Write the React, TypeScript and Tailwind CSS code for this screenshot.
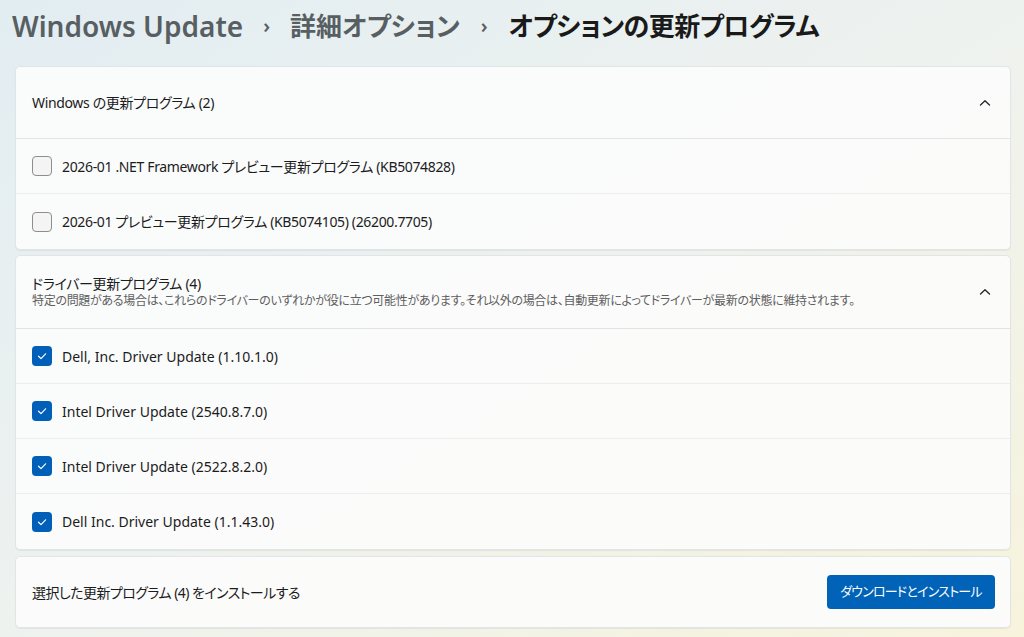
const jp = "font-['Segoe_UI','Noto_Sans','Noto_Sans_CJK_JP',sans-serif] [font-feature-settings:'palt']";

interface UpdateRowProps {
  label: string;
  checked: boolean;
  last?: boolean;
  tight?: boolean;
}

function Caret() {
  return (
    <svg width="12" height="8" viewBox="0 0 12 8" fill="none" className="mr-[1px]">
      <path d="M1.5 6 L6 1.8 L10.5 6" stroke="#2b2b2b" strokeWidth="1.4" strokeLinecap="round" strokeLinejoin="round" />
    </svg>
  );
}

function Checkbox({ checked }: { checked: boolean }) {
  if (checked) {
    return (
      <div className="flex h-[20px] w-[20px] shrink-0 items-center justify-center rounded-[4px] bg-[#005fb8]">
        <svg width="12" height="12" viewBox="0 0 12 12" fill="none">
          <path d="M2.5 6.2 L5 8.6 L9.6 3.8" stroke="white" strokeWidth="1.2" strokeLinecap="round" strokeLinejoin="round" />
        </svg>
      </div>
    );
  }
  return <div className="h-[20px] w-[20px] shrink-0 rounded-[4px] border border-[#8d8d8d] bg-[#f4f4f4]" />;
}

function UpdateRow(props: UpdateRowProps) {
  return (
    <div className={`flex h-[55px] items-center gap-[10px] pl-[16px] ${props.last ? "" : "border-b border-[#ededed]"}`}>
      <Checkbox checked={props.checked} />
      <span className={`text-[14px] text-[#1c1c1c] ${props.tight ? "tracking-[-0.025em]" : ""}`}>{props.label}</span>
    </div>
  );
}

function Card({ children }: { children: React.ReactNode }) {
  return (
    <div className="overflow-hidden rounded-[5px] border border-[#e2e5e7] bg-[#fcfcfc]/90 shadow-[0_1px_1px_rgba(0,0,0,0.06)]">
      {children}
    </div>
  );
}

export default function App() {
  const windowsUpdates = [
    "2026-01 .NET Framework プレビュー更新プログラム (KB5074828)",
    "2026-01 プレビュー更新プログラム (KB5074105) (26200.7705)",
  ];
  const drivers = [
    "Dell, Inc. Driver Update (1.10.1.0)",
    "Intel Driver Update (2540.8.7.0)",
    "Intel Driver Update (2522.8.2.0)",
    "Dell Inc. Driver Update (1.1.43.0)",
  ];

  return (
    <div className={`flex h-[637px] w-[1024px] flex-col overflow-hidden bg-linear-to-br from-[#e2edf2] via-[#eef2ef] to-[#f7f3dc] ${jp}`}>
      <div className="flex h-[52px] items-center pl-[12px] font-semibold leading-none">
        <span className="text-[28px] text-[#585f63]">Windows Update</span>
        <span className="mx-[20px] text-[20px] text-[#585f63]">›</span>
        <span className="text-[26px] text-[#585f63]">詳細オプション</span>
        <span className="mx-[21px] text-[20px] text-[#585f63]">›</span>
        <span className="text-[26px] tracking-[-0.02em] text-[#1a1a1a]">オプションの更新プログラム</span>
      </div>

      <div className="mt-[14px] flex flex-col gap-[5px] pl-[15px] pr-[13px]">
        <Card>
          <div className="flex h-[72px] items-center justify-between border-b border-[#e3e3e3] pl-[16px] pr-[18px]">
            <span className="text-[14px] tracking-[-0.025em] text-[#1c1c1c]">Windows の更新プログラム (2)</span>
            <Caret />
          </div>
          {windowsUpdates.map((u, i) => (
            <UpdateRow key={u} label={u} checked={false} tight last={i === windowsUpdates.length - 1} />
          ))}
        </Card>

        <Card>
          <div className="flex h-[73px] items-center justify-between border-b border-[#e3e3e3] pl-[16px] pr-[18px]">
            <div className="flex flex-col">
              <span className="text-[14px] leading-[18px] tracking-[-0.025em] text-[#1c1c1c]">ドライバー更新プログラム (4)</span>
              <span className="text-[12px] leading-[16px] tracking-[-0.025em] text-[#5e5e5e]">
                特定の問題がある場合は、これらのドライバーのいずれかが役に立つ可能性があります。それ以外の場合は、自動更新によってドライバーが最新の状態に維持されます。
              </span>
            </div>
            <Caret />
          </div>
          {drivers.map((d, i) => (
            <UpdateRow key={d} label={d} checked last={i === drivers.length - 1} />
          ))}
        </Card>

        <div className="mt-[1px]">
          <Card>
            <div className="flex h-[70px] items-center justify-between pl-[16px] pr-[15px]">
              <span className="text-[14px] tracking-[-0.04em] text-[#1c1c1c]">選択した更新プログラム (4) をインストールする</span>
              <button className="h-[34px] w-[168px] rounded-[4px] bg-[#0063b8] text-[13px] tracking-[-0.06em] text-white">
                ダウンロードとインストール
              </button>
            </div>
          </Card>
        </div>
      </div>
    </div>
  );
}
